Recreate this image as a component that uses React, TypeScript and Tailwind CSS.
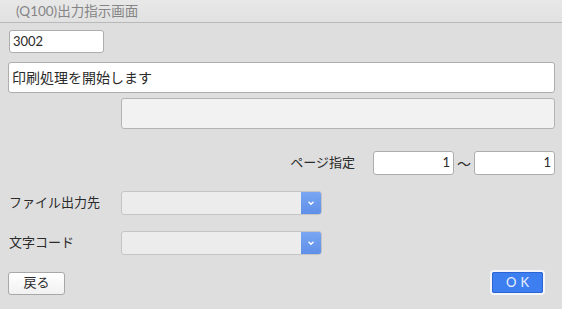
import React from "react";

const jp = "font-['Lato','Noto_Sans_CJK_JP',sans-serif]";

function Select() {
  return (
    <div className="flex h-6 w-[201px] overflow-hidden rounded-[3px] border border-[#c4c4c4] bg-[#ececec]">
      <div className="flex-1" />
      <div className="flex w-[20px] items-center justify-center bg-gradient-to-b from-[#79a6f3] to-[#5f8fe8]">
        <svg width="8" height="6" viewBox="0 0 8 6">
          <path d="M1.5 1.8 L4 4.2 L6.5 1.8" fill="none" stroke="#fff" strokeWidth="1.4" />
        </svg>
      </div>
    </div>
  );
}

export default function App() {
  return (
    <div className={`h-[309px] w-[562px] overflow-hidden bg-[#dedede] text-[#2b2b2b] ${jp}`}>
      <div className="flex h-[23px] items-center border-b border-[#b9b9b9] bg-gradient-to-b from-[#e8e8e8] to-[#e1e1e1] pl-[16px] text-[13.5px] text-[#858585]">
        (Q100)出力指示画面
      </div>

      <div className="flex flex-col pl-[8px] pr-[7px] pt-[7px]">
        <div className="ml-px flex h-[23px] w-[95px] items-center rounded-[3px] border border-[#adadad] bg-white pl-[3px] text-[13px]">
          3002
        </div>

        <div className="mt-[9px] flex h-[31px] items-center rounded-[3px] border border-[#adadad] bg-white pl-[3px] text-[14px]">
          印刷処理を開始します
        </div>

        <div className="ml-[113px] mt-[5px] h-[31px] rounded-[3px] border border-[#b4b4b4] bg-[#f2f2f2]" />

        <div className="mt-[22px] flex h-6 items-center justify-end text-[13px]">
          <span className="mr-[18px]">ページ指定</span>
          <div className="flex h-6 w-[81px] items-center justify-end rounded-[3px] border border-[#adadad] bg-white pr-[3px]">1</div>
          <span className="w-[20px] text-center text-[14px]">〜</span>
          <div className="flex h-6 w-[81px] items-center justify-end rounded-[3px] border border-[#adadad] bg-white pr-[3px]">1</div>
        </div>

        <div className="mt-[16px] flex items-center text-[13px]">
          <span className="w-[113px] pl-px">ファイル出力先</span>
          <Select />
        </div>

        <div className="mt-[16px] flex items-center text-[13px]">
          <span className="w-[113px] pl-px">文字コード</span>
          <Select />
        </div>

        <div className="mt-[15px] flex items-center justify-between pr-[10px]">
          <button className="mt-px flex h-[23px] w-[57px] items-center justify-center rounded-[3px] border border-[#a8a8a8] bg-gradient-to-b from-white to-[#f1f1f1] text-[13px]">
            戻る
          </button>
          <button className="flex h-[25px] w-[55px] items-center justify-center rounded-[4px] border-2 border-[#f4f6fa] bg-[#3d7ef0] text-[13px] tracking-[4px] text-[#eaf1ff] outline outline-1 outline-[#2d64d3] [outline-offset:-3px]">
            <span className="pl-[4px]">OK</span>
          </button>
        </div>
      </div>
    </div>
  );
}
